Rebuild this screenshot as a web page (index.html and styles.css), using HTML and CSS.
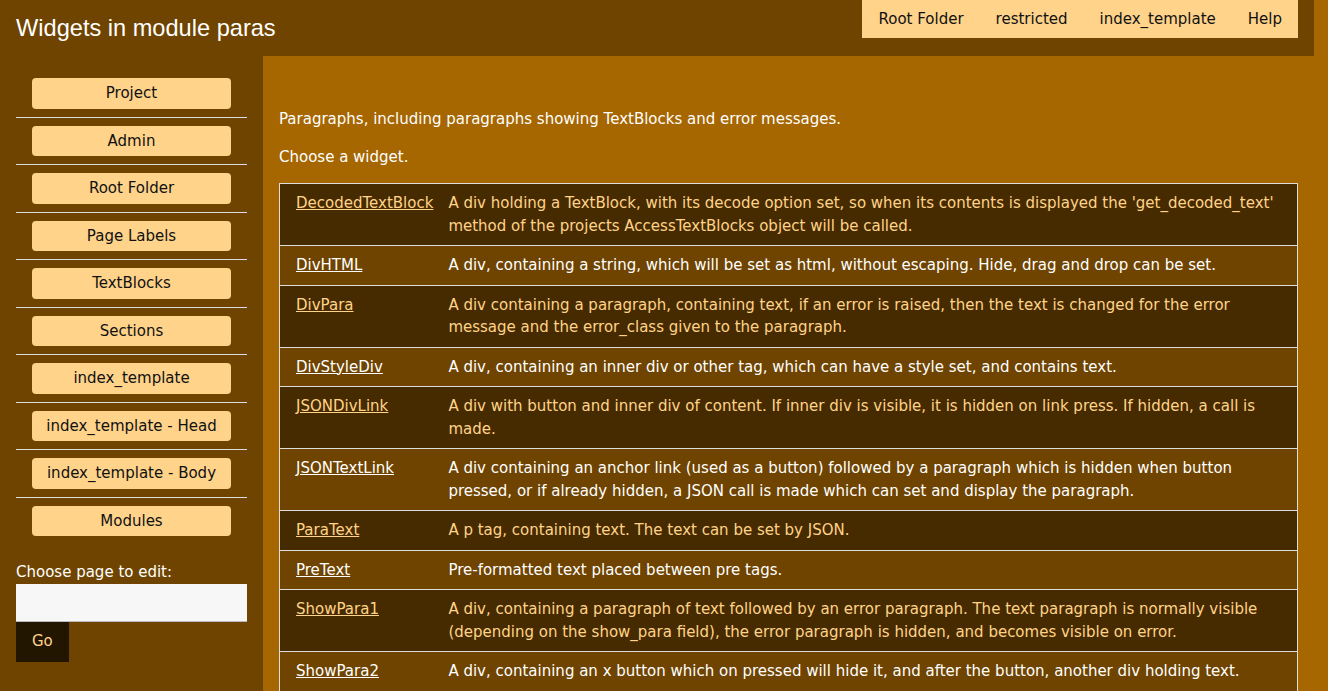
FILE: index.html
```html
<!DOCTYPE html>
<html lang="en">
<head>
<meta charset="utf-8">
<title>Widgets in module paras</title>
<link rel="stylesheet" href="styles.css">
</head>
<body>
<header class="topbar">
  <h1 class="title">Widgets in module paras</h1>
  <nav class="topnav">
    <a href="#">Root Folder</a>
    <a href="#">restricted</a>
    <a href="#">index_template</a>
    <a href="#">Help</a>
  </nav>
</header>
<div class="page">
  <aside class="sidebar">
    <ul class="menu">
      <li><a class="btn" href="#">Project</a></li>
      <li><a class="btn" href="#">Admin</a></li>
      <li><a class="btn" href="#">Root Folder</a></li>
      <li><a class="btn" href="#">Page Labels</a></li>
      <li><a class="btn" href="#">TextBlocks</a></li>
      <li><a class="btn" href="#">Sections</a></li>
      <li><a class="btn" href="#">index_template</a></li>
      <li><a class="btn" href="#">index_template - Head</a></li>
      <li><a class="btn" href="#">index_template - Body</a></li>
      <li><a class="btn" href="#">Modules</a></li>
    </ul>
    <form class="goto">
      <label class="goto-label" for="page">Choose page to edit:</label>
      <input class="goto-input" id="page" type="text">
      <button class="goto-btn" type="button">Go</button>
    </form>
  </aside>
  <main class="main">
    <p>Paragraphs, including paragraphs showing TextBlocks and error messages.</p>
    <p>Choose a widget.</p>
    <table class="widgets">
      <tr><td><a href="#">DecodedTextBlock</a></td><td>A div holding a TextBlock, with its decode option set, so when its contents is displayed the 'get_decoded_text' method of the projects AccessTextBlocks object will be called.</td></tr>
      <tr><td><a href="#">DivHTML</a></td><td>A div, containing a string, which will be set as html, without escaping. Hide, drag and drop can be set.</td></tr>
      <tr><td><a href="#">DivPara</a></td><td>A div containing a paragraph, containing text, if an error is raised, then the text is changed for the error message and the error_class given to the paragraph.</td></tr>
      <tr><td><a href="#">DivStyleDiv</a></td><td>A div, containing an inner div or other tag, which can have a style set, and contains text.</td></tr>
      <tr><td><a href="#">JSONDivLink</a></td><td>A div with button and inner div of content. If inner div is visible, it is hidden on link press. If hidden, a call is made.</td></tr>
      <tr><td><a href="#">JSONTextLink</a></td><td>A div containing an anchor link (used as a button) followed by a paragraph which is hidden when button pressed, or if already hidden, a JSON call is made which can set and display the paragraph.</td></tr>
      <tr><td><a href="#">ParaText</a></td><td>A p tag, containing text. The text can be set by JSON.</td></tr>
      <tr><td><a href="#">PreText</a></td><td>Pre-formatted text placed between pre tags.</td></tr>
      <tr><td><a href="#">ShowPara1</a></td><td>A div, containing a paragraph of text followed by an error paragraph. The text paragraph is normally visible (depending on the show_para field), the error paragraph is hidden, and becomes visible on error.</td></tr>
      <tr><td><a href="#">ShowPara2</a></td><td>A div, containing an x button which on pressed will hide it, and after the button, another div holding text.</td></tr>
    </table>
  </main>
</div>
</body>
</html>
```
FILE: styles.css
```css
html, body {
  margin: 0;
  padding: 0;
}
body {
  background: #a66600;
  font-family: "DejaVu Sans", Verdana, sans-serif;
  font-size: 15px;
  line-height: 1.5;
  color: #ffffff;
  min-height: 691px;
}
.topbar {
  display: flex;
  justify-content: space-between;
  align-items: flex-start;
  background: #6f4400;
  height: 56px;
  margin-right: 14px;
  padding: 0 16px;
}
.title {
  margin: 0;
  padding-top: 12px;
  font-family: "Liberation Sans", Arial, sans-serif;
  font-size: 23.6px;
  font-weight: normal;
  line-height: 32px;
  color: #ffffff;
}
.topnav {
  display: flex;
  background: #ffd38a;
  height: 38px;
  align-items: center;
}
.topnav a {
  color: #111111;
  text-decoration: none;
  padding: 0 16px;
}
.page {
  display: flex;
  align-items: stretch;
  min-height: 635px;
}
.sidebar {
  width: 231px;
  flex: none;
  background: #6f4400;
  padding: 14px 16px 16px;
}
.menu {
  list-style: none;
  margin: 0;
  padding: 0;
}
.menu li {
  padding: 8px 16px;
  border-bottom: 1px solid #dddddd;
}
.menu li:last-child {
  border-bottom: none;
}
.btn {
  display: block;
  background: #ffd38a;
  color: #111111;
  text-align: center;
  text-decoration: none;
  border-radius: 4px;
  padding: 4px 0;
}
.goto {
  margin: 17px 0 0;
  display: flex;
  flex-direction: column;
  align-items: flex-start;
}
.goto-label {
  color: #ffffff;
}
.goto-input {
  box-sizing: border-box;
  width: 231px;
  height: 38px;
  border: none;
  border-bottom: 1px solid #bbbbbb;
  background: #f7f7f7;
  padding: 0 8px;
  font: inherit;
  margin: 0;
}
.goto-btn {
  font: inherit;
  height: 40px;
  padding: 0 16px;
  border: none;
  background: #231600;
  color: #ffd38a;
  margin: 0;
}
.main {
  flex: 1;
  padding: 37px 30px 0 16px;
}
.main p {
  margin: 15px 0;
}
.widgets {
  width: 100%;
  border-collapse: collapse;
  border: 1px solid #dddddd;
}
.widgets td {
  padding: 8px;
  vertical-align: top;
  border-top: 1px solid #dddddd;
}
.widgets td:first-child {
  padding-left: 16px;
  padding-right: 7px;
  white-space: nowrap;
}
.widgets td:last-child {
  padding-right: 16px;
}
.widgets tr:nth-child(odd) {
  background: #472b00;
  color: #ffd38a;
}
.widgets tr:nth-child(even) {
  background: #6f4400;
  color: #ffffff;
}
.widgets a {
  color: inherit;
  text-decoration: underline;
}
```
